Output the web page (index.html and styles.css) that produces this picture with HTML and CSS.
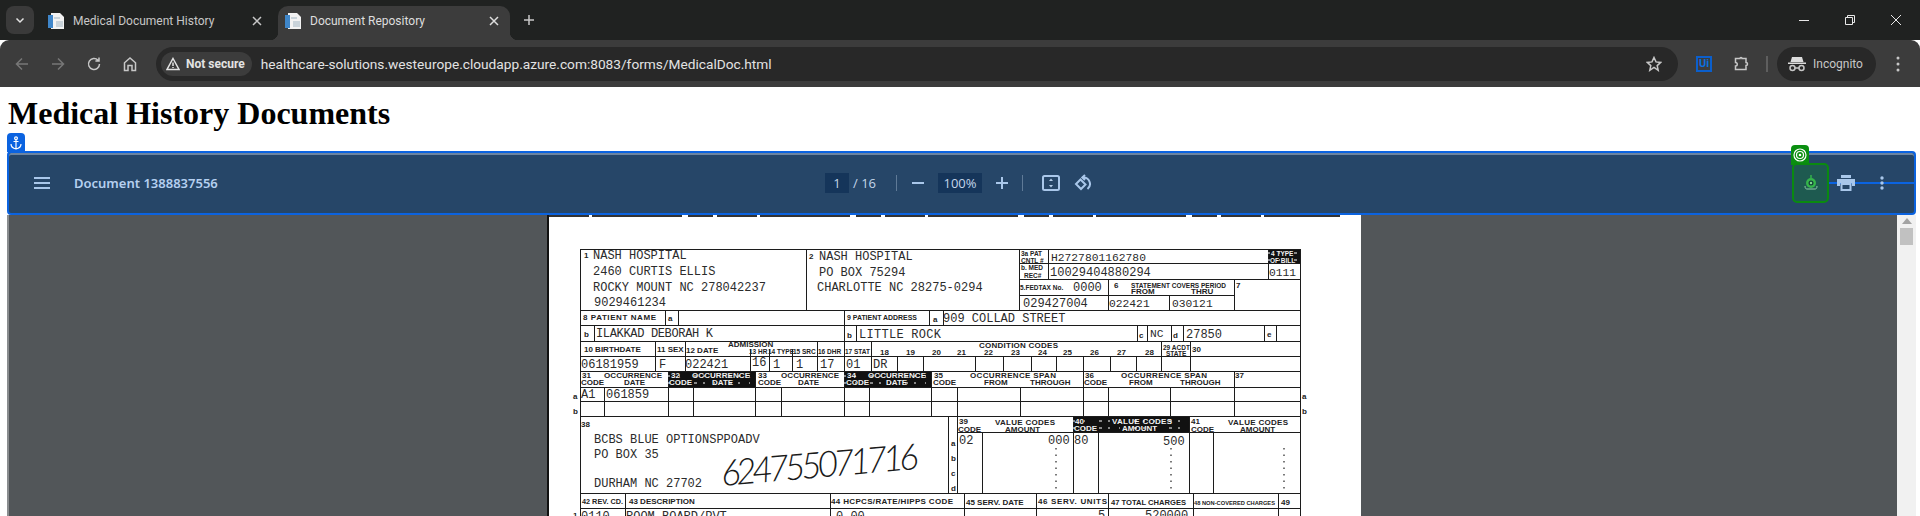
FILE: index.html
```html
<!DOCTYPE html>
<html lang="en">
<head>
  <meta charset="UTF-8" />
  <title>Document Repository</title>
  <link rel="stylesheet" href="styles.css">
</head>
<body>
  <header class="chrome">
    <div class="tabstrip">
      <button class="tab-menu"><svg width="12" height="12" viewBox="0 0 12 12"><path class="ic-line" d="M2.5 4.5 6 8l3.5-3.5"/></svg></button>
      <div class="tab">
        <svg class="favicon" width="16" height="16" viewBox="0 0 16 16"><path fill="#f2f2f2" d="M3 0h9l4 4v12H3z"/><path fill="#3f86c9" d="M0 2h5v13H0z"/><path fill="#c9d3da" d="M8 8h7v6H8zM6 4h6v2H6z"/></svg>
        <span class="tab-title">Medical Document History</span>
        <svg class="tab-x" width="10" height="10" viewBox="0 0 10 10"><path class="ic-line" d="M1 1l8 8M9 1 1 9"/></svg>
      </div>
      <div class="tab active">
        <svg class="favicon" width="16" height="16" viewBox="0 0 16 16"><path fill="#f2f2f2" d="M3 0h9l4 4v12H3z"/><path fill="#3f86c9" d="M0 2h5v13H0z"/><path fill="#c9d3da" d="M8 8h7v6H8zM6 4h6v2H6z"/></svg>
        <span class="tab-title">Document Repository</span>
        <svg class="tab-x" width="10" height="10" viewBox="0 0 10 10"><path class="ic-line" d="M1 1l8 8M9 1 1 9"/></svg>
      </div>
      <svg class="new-tab" width="12" height="12" viewBox="0 0 12 12"><path class="ic-line" d="M6 1v10M1 6h10"/></svg>
      <div class="win-controls">
        <svg width="12" height="12" viewBox="0 0 12 12"><path class="ic-thin" d="M1 6.5h10"/></svg>
        <svg width="12" height="12" viewBox="0 0 12 12"><path class="ic-thin" d="M1.5 3.5h7v7h-7zM3.5 3.5v-2h7v7h-2"/></svg>
        <svg width="12" height="12" viewBox="0 0 12 12"><path class="ic-thin" d="M1 1l10 10M11 1 1 11"/></svg>
      </div>
    </div>
    <div class="toolbar">
      <div class="nav-btns">
        <svg class="dim" width="16" height="16" viewBox="0 0 16 16"><path class="ic-line" d="M14 8H2.5M8 2.5 2.5 8 8 13.5"/></svg>
        <svg class="dim" width="16" height="16" viewBox="0 0 16 16"><path class="ic-line" d="M2 8h11.5M8 2.5 13.5 8 8 13.5"/></svg>
        <svg width="16" height="16" viewBox="0 0 16 16"><path class="ic-line" d="M13.5 8A5.5 5.5 0 1 1 12 4.2M13 1.5v3.600H9.400"/></svg>
        <svg width="16" height="16" viewBox="0 0 16 16"><path class="ic-line" d="M2.5 14.5V6.8L8 2l5.5 4.8v7.700H10v-5H6v5z"/></svg>
      </div>
      <div class="omnibox">
        <div class="secure-chip">
          <svg width="14" height="14" viewBox="0 0 14 14"><path class="ic-line" d="M7 1.5 13 12.5H1zM7 5.5V9M7 10v1"/></svg>
          <span>Not secure</span>
        </div>
        <span class="url">healthcare-solutions.westeurope.cloudapp.azure.com:8083/forms/MedicalDoc.html</span>
        <svg class="star" width="16" height="16" viewBox="0 0 16 16"><path class="ic-line" d="m8 1.5 2 4.400 4.800.5-3.600 3.200 1 4.700L8 11.500l-4.200 2.800 1-4.700L1.200 6.400 6 5.900z"/></svg>
      </div>
      <div class="ext-ui">Ui</div>
      <svg class="ext-puzzle" width="16" height="16" viewBox="0 0 16 16"><path class="ic-line" d="M2.5 2.5H7a1 1 0 0 1 2 0h4v4a1.500 1.500 0 0 1 0 3v4H2.500V10a1.500 1.500 0 0 0 0-3.500z"/></svg>
      <div class="tool-divider"></div>
      <div class="incognito">
        <svg width="20" height="16" viewBox="0 0 20 16"><path fill="#dcdcdc" d="M5 1h10l1.500 5h-13zM1 6.500h18V8H1z"/><circle class="ic-line" cx="5.500" cy="12" r="2.500"/><circle class="ic-line" cx="14.500" cy="12" r="2.500"/><path class="ic-line" d="M8 12h4"/></svg>
        <span>Incognito</span>
      </div>
      <svg class="kebab" width="4" height="16" viewBox="0 0 4 16"><circle fill="#c7c7c7" cx="2" cy="2" r="1.5"/><circle fill="#c7c7c7" cx="2" cy="8" r="1.5"/><circle fill="#c7c7c7" cx="2" cy="14" r="1.5"/></svg>
    </div>
  </header>

  <main class="page">
    <h1>Medical History Documents</h1>

    <section class="viewer">
      <div class="anchor-tab">
        <svg width="12" height="14" viewBox="0 0 12 14"><circle class="ic-white" cx="6" cy="2.2" r="1.4"/><path class="ic-white" d="M6 3.600V13M3.500 5.500h5M1 8c0 3 2.500 4.500 5 5 2.500-.5 5-2 5-5"/></svg>
      </div>

      <div class="pdf-bar">
        <div class="bar-left">
          <svg width="16" height="12" viewBox="0 0 16 12"><path class="ic-bar" d="M0 1h16M0 6h16M0 11h16"/></svg>
          <span class="doc-title">Document 1388837556</span>
        </div>
        <div class="bar-center">
          <span class="num-box page-box">1</span>
          <span class="page-total">/ 16</span>
          <span class="bar-sep"></span>
          <svg width="12" height="12" viewBox="0 0 12 12"><path class="ic-bar" d="M0 6h12"/></svg>
          <span class="num-box zoom-box">100%</span>
          <svg width="12" height="12" viewBox="0 0 12 12"><path class="ic-bar" d="M0 6h12M6 0v12"/></svg>
          <span class="bar-sep"></span>
          <svg width="18" height="16" viewBox="0 0 18 16"><rect class="ic-bar" x="1" y="1" width="16" height="14" rx="1.5"/><path fill="#b4cdea" d="M9 3.500 11 6H7zM9 12.500 7 10h4z"/></svg>
          <svg class="rotate-ic" width="18" height="18" viewBox="0 0 18 18"><path class="ic-bar" d="M6.500 5.500 11.500 10.500 7 15 2 10z"/><path class="ic-bar" d="M8.500 3.500a6.500 6.500 0 0 1 5 11.500M11 1 8.300 3.500 11 6"/></svg>
        </div>
        <div class="bar-right">
          <svg width="18" height="16" viewBox="0 0 18 16"><path fill="#a9c7ea" d="M4 0h10v3H4zM0 4h18v7h-3V8H3v3H0z"/><path class="ic-bar" d="M4.500 9h9v6h-9z"/></svg>
          <svg width="4" height="14" viewBox="0 0 4 14"><circle fill="#a9c7ea" cx="2" cy="2" r="1.7"/><circle fill="#a9c7ea" cx="2" cy="7" r="1.7"/><circle fill="#a9c7ea" cx="2" cy="12" r="1.7"/></svg>
        </div>

        <div class="target-line"></div>
        <div class="target-tab">
          <svg width="14" height="14" viewBox="0 0 14 14"><circle class="ic-white" cx="7" cy="7" r="6"/><circle class="ic-white" cx="7" cy="7" r="3.5"/><circle fill="#fff" cx="7" cy="7" r="1.3"/></svg>
        </div>
        <div class="target-box">
          <svg width="16" height="16" viewBox="0 0 16 16"><path class="ic-tgt-pale" d="M2 11c0 2.500 1 3 2 3h8c1 0 2-.5 2-3"/><circle cx="8" cy="8" r="5" fill="#35b54a"/><circle cx="8" cy="8" r="2.500" fill="#153f3a"/><circle cx="8" cy="8" r="1.200" fill="#7fdc8e"/><path class="ic-tgt" d="M8 0v3"/></svg>
        </div>
      </div>

      <div class="doc-row">
        <div class="doc-area">
          <svg class="sheet" width="812" height="301" viewBox="549 215 812 301">
            <path class="scan-line" d="M549 216H1340"/>

            <rect class="inv" x="668" y="372" width="87" height="15"/>
            <rect class="inv" x="844" y="372" width="87" height="15"/>
            <rect class="inv" x="1073" y="417" width="116" height="15"/>
            <rect class="inv" x="1268" y="250" width="33" height="13"/>

            <path class="rule" d="M580 249.5H1301M1019 263.5H1301M1019 279.5H1301M1019 295.5H1234M580 310.5H1301M580 325.5H1301M580 341.5H1301M580 356.5H1301M580 371.5H1301M580 387.5H1301M580 401.5H1301M580 416.5H1301M957 432.5H1301M580 493.5H1301M580 508.5H1301"/>
            <path class="rule" d="M580.5 249V516M1300.5 249V516M806.5 249V310M1019.5 249V310M1048.5 249V279M1268.5 249V279M1108.5 279V310M1169.5 295V310M1234.5 279V310"/>
            <path class="rule" d="M665.5 311V325M678.5 311V325M844.5 310V341M929.5 310V325M943.5 310V325M594.5 325V341M856.5 325V341M1137.5 325V341M1147.5 325V341M1171.5 325V341M1183.5 325V341M1264.5 325V341M1276.5 325V341"/>
            <path class="rule" d="M655.5 341V371M685.5 341V371M750.5 349V371M769.5 349V371M792.5 349V371M817.5 341V371M844.5 341V371M871.5 341V371M897.5 356V371M923.5 356V371M975.5 356V371M1003.5 356V371M1031.5 356V371M1056.5 356V371M1083.5 356V371M1110.5 356V371M1136.5 356V371M1161.5 341V371M1190.5 341V371"/>
            <path class="rule" d="M604.5 387V416M668.5 371V416M693.5 387V416M755.5 371V416M781.5 387V416M844.5 371V416M869.5 387V416M931.5 371V416M957.5 387V416M1020.5 387V416M1083.5 371V416M1108.5 387V416M1170.5 387V416M1234.5 371V416"/>
            <path class="rule" d="M948.5 416V493M957.5 416V493M982.5 432V493M1073.5 416V493M1098.5 432V493M1189.5 416V493M1213.5 432V493"/>
            <path class="rule" d="M625.5 493V516M830.5 493V516M964.5 493V516M1036.5 493V516M1108.5 493V516M1193.5 493V516M1278.5 493V516"/>
            <path class="dots" d="M1056 448V491M1171 448V491M1284 448V491"/>

            <text class="lbl" x="584" y="258">1</text>
            <text class="mono" x="593" y="259">NASH HOSPITAL</text>
            <text class="mono" x="593" y="275">2460 CURTIS ELLIS</text>
            <text class="mono" x="593" y="291">ROCKY MOUNT NC 278042237</text>
            <text class="mono" x="594" y="306">9029461234</text>
            <text class="lbl" x="809" y="259">2</text>
            <text class="mono" x="819" y="260">NASH HOSPITAL</text>
            <text class="mono" x="819" y="276">PO BOX 75294</text>
            <text class="mono" x="817" y="291">CHARLOTTE NC 28275-0294</text>

            <text class="tiny" x="1021" y="256">3a PAT</text>
            <text class="tiny" x="1021" y="263">CNTL #</text>
            <text class="tiny" x="1021" y="270">b. MED</text>
            <text class="tiny" x="1024" y="278">REC#</text>
            <text class="mono sm" x="1051" y="261">H2727801162780</text>
            <text class="mono" x="1050" y="276">10029404880294</text>
            <text class="tiny rev" x="1271" y="256">4 TYPE</text>
            <text class="tiny rev" x="1270" y="263">OF BILL</text>
            <text class="mono sm" x="1269" y="276">0111</text>

            <text class="tiny" x="1020" y="290">5.FEDTAX No.</text>
            <text class="mono" x="1073" y="291">0000</text>
            <text class="lbl" x="1114" y="288">6</text>
            <text class="tiny" x="1131" y="288" textLength="95" lengthAdjust="spacingAndGlyphs">STATEMENT COVERS PERIOD</text>
            <text class="lbl" x="1131" y="294">FROM</text>
            <text class="lbl" x="1191" y="294">THRU</text>
            <text class="lbl" x="1236" y="288">7</text>
            <text class="mono" x="1023" y="307">029427004</text>
            <text class="mono sm" x="1109" y="307">022421</text>
            <text class="mono sm" x="1172" y="307">030121</text>

            <text class="lbl" x="583" y="320" textLength="73">8 PATIENT NAME</text>
            <text class="lbl" x="668" y="321">a</text>
            <text class="lbl" x="847" y="320" textLength="70" lengthAdjust="spacingAndGlyphs">9 PATIENT ADDRESS</text>
            <text class="lbl" x="933" y="322">a</text>
            <text class="mono" x="943" y="322">909 COLLAD  STREET</text>
            <text class="lbl" x="584" y="337">b</text>
            <text class="mono" x="596" y="337" textLength="117">ILAKKAD DEBORAH K</text>
            <text class="lbl" x="847" y="338">b</text>
            <text class="mono" x="859" y="338" textLength="82">LITTLE ROCK</text>
            <text class="lbl" x="1139" y="338">c</text>
            <text class="mono sm" x="1150" y="337">NC</text>
            <text class="lbl" x="1173" y="338">d</text>
            <text class="mono" x="1186" y="338">27850</text>
            <text class="lbl" x="1267" y="337">e</text>

            <text class="lbl" x="584" y="352">10 BIRTHDATE</text>
            <text class="lbl" x="657" y="352">11 SEX</text>
            <text class="lbl" x="686" y="353">12 DATE</text>
            <text class="lbl" x="728" y="347">ADMISSION</text>
            <text class="tiny" x="749" y="354">13 HR</text>
            <text class="tiny" x="768" y="354">14 TYPE</text>
            <text class="tiny" x="793" y="354">15 SRC</text>
            <text class="tiny" x="818" y="354">16 DHR</text>
            <text class="tiny" x="845" y="354">17 STAT</text>
            <text class="lbl" x="880" y="355">18</text>
            <text class="lbl" x="906" y="355">19</text>
            <text class="lbl" x="932" y="355">20</text>
            <text class="lbl" x="957" y="355">21</text>
            <text class="lbl" x="984" y="355">22</text>
            <text class="lbl" x="1011" y="355">23</text>
            <text class="lbl" x="1038" y="355">24</text>
            <text class="lbl" x="1063" y="355">25</text>
            <text class="lbl" x="1090" y="355">26</text>
            <text class="lbl" x="1117" y="355">27</text>
            <text class="lbl" x="1145" y="355">28</text>
            <text class="lbl" x="979" y="348" textLength="79">CONDITION CODES</text>
            <text class="tiny" x="1163" y="350">29 ACDT</text>
            <text class="tiny" x="1166" y="356">STATE</text>
            <text class="lbl" x="1192" y="352">30</text>

            <text class="mono" x="581" y="368">06181959</text>
            <text class="mono" x="659" y="368">F</text>
            <text class="mono" x="685" y="368">022421</text>
            <text class="mono" x="752" y="366">16</text>
            <text class="mono" x="773" y="368">1</text>
            <text class="mono" x="796" y="368">1</text>
            <text class="mono" x="820" y="368">17</text>
            <text class="mono" x="846" y="368">01</text>
            <text class="mono" x="873" y="368">DR</text>

            <text class="lbl" x="582" y="378">31</text>
            <text class="lbl" x="604" y="378" textLength="58">OCCURRENCE</text>
            <text class="lbl" x="581" y="385">CODE</text>
            <text class="lbl" x="624" y="385">DATE</text>
            <text class="lbl rev" x="671" y="378">32</text>
            <text class="lbl rev" x="692" y="378" textLength="58">OCCURRENCE</text>
            <text class="lbl rev" x="669" y="385">CODE</text>
            <text class="lbl rev" x="712" y="385">DATE</text>
            <text class="lbl" x="758" y="378">33</text>
            <text class="lbl" x="781" y="378" textLength="58">OCCURRENCE</text>
            <text class="lbl" x="758" y="385">CODE</text>
            <text class="lbl" x="798" y="385">DATE</text>
            <text class="lbl rev" x="847" y="378">34</text>
            <text class="lbl rev" x="868" y="378" textLength="58">OCCURRENCE</text>
            <text class="lbl rev" x="846" y="385">CODE</text>
            <text class="lbl rev" x="886" y="385">DATE</text>
            <text class="lbl" x="934" y="378">35</text>
            <text class="lbl" x="933" y="385">CODE</text>
            <text class="lbl" x="970" y="378" textLength="86">OCCURRENCE SPAN</text>
            <text class="lbl" x="984" y="385">FROM</text>
            <text class="lbl" x="1030" y="385">THROUGH</text>
            <text class="lbl" x="1085" y="378">36</text>
            <text class="lbl" x="1084" y="385">CODE</text>
            <text class="lbl" x="1121" y="378" textLength="86">OCCURRENCE SPAN</text>
            <text class="lbl" x="1129" y="385">FROM</text>
            <text class="lbl" x="1180" y="385">THROUGH</text>
            <text class="lbl" x="1235" y="378">37</text>

            <text class="lbl" x="573" y="399">a</text>
            <text class="lbl" x="573" y="414">b</text>
            <text class="lbl" x="1302" y="399">a</text>
            <text class="lbl" x="1302" y="414">b</text>
            <text class="mono" x="581" y="398">A1</text>
            <text class="mono" x="606" y="398">061859</text>

            <text class="lbl" x="581" y="427">38</text>
            <text class="mono" x="594" y="443">BCBS BLUE OPTIONSPPOADV</text>
            <text class="mono" x="594" y="458">PO BOX 35</text>
            <text class="mono" x="594" y="487">DURHAM NC 27702</text>
            <text class="hand" x="722" y="486" textLength="198" transform="rotate(-5 722 486)">624755071716</text>
            <text class="lbl" x="951" y="446">a</text>
            <text class="lbl" x="951" y="461">b</text>
            <text class="lbl" x="951" y="476">c</text>
            <text class="lbl" x="951" y="491">d</text>

            <text class="lbl" x="959" y="424">39</text>
            <text class="lbl" x="958" y="432">CODE</text>
            <text class="lbl" x="995" y="425" textLength="60">VALUE CODES</text>
            <text class="lbl" x="1005" y="432">AMOUNT</text>
            <text class="lbl rev" x="1075" y="424">40</text>
            <text class="lbl rev" x="1074" y="431">CODE</text>
            <text class="lbl rev" x="1112" y="424" textLength="60">VALUE CODES</text>
            <text class="lbl rev" x="1122" y="431">AMOUNT</text>
            <text class="lbl" x="1191" y="424">41</text>
            <text class="lbl" x="1191" y="432">CODE</text>
            <text class="lbl" x="1228" y="425" textLength="60">VALUE CODES</text>
            <text class="lbl" x="1240" y="432">AMOUNT</text>
            <text class="mono" x="959" y="444">02</text>
            <text class="mono" x="1048" y="444">000</text>
            <text class="mono" x="1074" y="444">80</text>
            <text class="mono" x="1163" y="445">500</text>

            <path class="specks" d="M668 376H755M668 383H755M844 376H931M844 383H931M1073 421H1189M1073 428H1189M1268 253H1301M1268 260H1301"/>

            <text class="lbl" x="582" y="504" textLength="41" lengthAdjust="spacingAndGlyphs">42 REV. CD.</text>
            <text class="lbl" x="629" y="504">43 DESCRIPTION</text>
            <text class="lbl" x="831" y="504" textLength="122">44 HCPCS/RATE/HIPPS CODE</text>
            <text class="lbl" x="966" y="505">45 SERV. DATE</text>
            <text class="lbl" x="1038" y="504" textLength="69">46 SERV. UNITS</text>
            <text class="lbl" x="1111" y="505" textLength="75" lengthAdjust="spacingAndGlyphs">47 TOTAL CHARGES</text>
            <text class="micro" x="1194" y="505" textLength="81" lengthAdjust="spacingAndGlyphs">48 NON-COVERED CHARGES</text>
            <text class="lbl" x="1281" y="505">49</text>

            <text class="lbl" x="573" y="518">1</text>
            <text class="mono" x="581" y="520">0110</text>
            <text class="mono" x="626" y="520">ROOM-BOARD/PVT</text>
            <text class="mono" x="836" y="520">0.00</text>
            <text class="mono" x="1098" y="519">5</text>
            <text class="mono" x="1145" y="519">520000</text>
          </svg>
        </div>
        <div class="scrollbar">
          <svg width="10" height="6" viewBox="0 0 10 6"><path fill="#a3a3a3" d="M5 0l5 6H0z"/></svg>
          <div class="scroll-thumb"></div>
        </div>
      </div>
    </section>
  </main>
</body>
</html>
```

FILE: styles.css
```css
* {
  box-sizing: border-box;
}

html, body {
  margin: 0;
  height: 516px;
  overflow: hidden;
  background: white;
}

/* browser frame */
.chrome {
  font-family: Roboto, 'Liberation Sans', sans-serif;
  color: #c7c7c7;
}

.tabstrip {
  display: flex;
  align-items: flex-end;
  height: 40px;
  background: #202221;
}

.tab-menu {
  align-self: flex-start;
  display: flex;
  align-items: center;
  justify-content: center;
  width: 28px;
  height: 28px;
  margin: 6px 7px 0 6px;
  padding: 0;
  border: none;
  border-radius: 8px;
  background: #3a3a3a;
  color: #e3e3e3;
}

.tab {
  position: relative;
  display: flex;
  align-items: center;
  gap: 9px;
  width: 232px;
  height: 34px;
  padding: 0 11px 4px 7px;
  font-size: 12px;
}

.tab.active {
  margin-left: 5px;
  background: #3c3c3c;
  border-radius: 10px 10px 0 0;
  color: #dedede;
}

/* little flares at the foot of the active tab */
.tab.active::before,
.tab.active::after {
  content: "";
  position: absolute;
  bottom: 0;
  width: 8px;
  height: 8px;
}

.tab.active::before {
  left: -8px;
  background: radial-gradient(circle at 0 0, transparent 8px, #3c3c3c 8.5px);
}

.tab.active::after {
  right: -8px;
  background: radial-gradient(circle at 100% 0, transparent 8px, #3c3c3c 8.5px);
}

.tab-title {
  flex: 1;
  white-space: nowrap;
}

.favicon, .tab-x {
  flex: none;
}

.new-tab {
  align-self: center;
  margin-left: 13px;
}

.win-controls {
  align-self: flex-start;
  display: flex;
  gap: 34px;
  margin: 14px 18px 0 auto;
}

.ic-line {
  fill: none;
  stroke: currentColor;
  stroke-width: 1.5;
}

.ic-thin {
  fill: none;
  stroke: #e8e8e8;
  stroke-width: 1;
}

.toolbar {
  display: flex;
  align-items: center;
  height: 47px;
  padding: 0 20px 0 14px;
  background: #3c3c3c;
  border-radius: 9px 9px 0 0;
}

.nav-btns {
  display: flex;
  gap: 20px;
  margin-right: 18px;
}

.nav-btns .dim {
  color: #777;
}

.omnibox {
  display: flex;
  align-items: center;
  width: 1522px;
  height: 34px;
  padding: 0 16px 0 5px;
  border-radius: 17px;
  background: #282828;
}

.secure-chip {
  display: flex;
  align-items: center;
  gap: 6px;
  height: 24px;
  padding: 0 7px 0 5px;
  border-radius: 12px;
  background: #3c3c3c;
  color: #e3e3e3;
  font-size: 12px;
  font-weight: 700;
}

.url {
  margin-left: 9px;
  color: #e3e3e3;
  font-size: 13.7px;
  white-space: nowrap;
}

.star {
  margin-left: auto;
}

.ext-ui {
  width: 16px;
  height: 16px;
  margin-left: 18px;
  border: 2px solid #0b5fcc;
  color: #0b6fe0;
  font-size: 11px;
  font-weight: 700;
  line-height: 12px;
  text-align: center;
}

.ext-puzzle {
  margin-left: 21px;
}

.tool-divider {
  width: 2px;
  height: 16px;
  margin: 0 9px 0 17px;
  background: #5e5e5e;
}

.incognito {
  display: flex;
  align-items: center;
  gap: 6px;
  width: 99px;
  height: 34px;
  padding-left: 10px;
  border-radius: 17px;
  background: #282828;
  font-size: 12px;
}

.kebab {
  margin-left: 20px;
}

/* page */
.page h1 {
  margin: 8px 0 19px 8px;
  font-family: 'Liberation Serif', serif;
  font-size: 32px;
  font-weight: 700;
  line-height: 37px;
  color: black;
}

.viewer {
  position: relative;
  margin: 0 4px 0 7px;
}

.anchor-tab {
  position: absolute;
  left: 0;
  top: -18px;
  display: flex;
  align-items: center;
  justify-content: center;
  width: 18px;
  height: 19px;
  border-radius: 4px 4px 0 0;
  background: #0b63e0;
}

.ic-white {
  fill: none;
  stroke: white;
  stroke-width: 1.2;
}

.pdf-bar {
  position: relative;
  display: grid;
  grid-template-columns: 816px auto 1fr;
  align-items: center;
  height: 64px;
  border: 2px solid #0b63e0;
  border-radius: 4px;
  background: #264668;
  box-shadow: inset 0 2px 0 #6c84a0;
  font-family: 'Open Sans', 'Liberation Sans', sans-serif;
  color: #c4d6ea;
}

.ic-bar {
  fill: none;
  stroke: #a9c7ea;
  stroke-width: 2;
}

.bar-left {
  display: flex;
  align-items: center;
  gap: 24px;
  padding-left: 25px;
}

.doc-title {
  color: #b5d0f0;
  font-family: 'Noto Sans', sans-serif;
  font-size: 13px;
  font-weight: 600;
}

.bar-center {
  display: flex;
  align-items: center;
  font-size: 13px;
}

.num-box {
  height: 20px;
  background: #15355a;
  line-height: 20px;
  text-align: center;
}

.page-box {
  width: 24px;
}

.page-total {
  margin-left: 4px;
}

.bar-sep {
  width: 1px;
  height: 16px;
  margin: 0 15px 0 20px;
  background: #5f7a97;
}

.zoom-box {
  width: 44px;
  margin: 0 14px;
}

.bar-center svg + .bar-sep {
  margin: 0 19px 0 14px;
}

.rotate-ic {
  margin-left: 14px;
}

.bar-right {
  position: relative;
  z-index: 1;
  display: flex;
  align-items: center;
  justify-content: flex-end;
  gap: 25px;
  padding-right: 30px;
}

.target-line {
  position: absolute;
  left: 1820px;
  right: 0;
  top: 29px;
  height: 2px;
  background: #0b63e0;
}

.target-tab {
  position: absolute;
  left: 1782px;
  top: -8px;
  display: flex;
  align-items: center;
  justify-content: center;
  width: 18px;
  height: 20px;
  border-radius: 4px 4px 0 0;
  background: #0a8f10;
}

.target-box {
  position: absolute;
  left: 1783px;
  top: 10px;
  display: flex;
  align-items: center;
  justify-content: center;
  width: 37px;
  height: 40px;
  border: 2px solid #0a8a10;
  border-radius: 5px;
  background: #1e5a50;
}

.ic-tgt {
  fill: none;
  stroke: #35b54a;
  stroke-width: 1.5;
}

.ic-tgt-pale {
  fill: none;
  stroke: #8fcfa8;
  stroke-width: 1;
}

.doc-row {
  display: flex;
  height: 301px;
  background: #525659;
  border-left: 2px solid #8a8d8f;
}

.doc-area {
  flex: 1;
  padding-left: 540px;
}

.sheet {
  display: block;
  background: white;
  box-shadow: -2px 0 0 #111;
}

.scan-line {
  fill: none;
  stroke: #333;
  stroke-width: 2;
  stroke-dasharray: 40 3 90 6 25 4;
}

.rule {
  fill: none;
  stroke: #1c1c1c;
  stroke-width: 1;
}

.dots {
  fill: none;
  stroke: #222;
  stroke-width: 1.2;
  stroke-dasharray: 1.5 5;
}

.inv {
  fill: #111;
}

.specks {
  fill: none;
  stroke: white;
  stroke-width: 1;
  stroke-dasharray: 2 9 1 14 3 6;
}

.mono {
  font-family: 'Liberation Mono', monospace;
  font-size: 12px;
  fill: #2b2b2b;
}

.mono.sm {
  font-size: 11.3px;
}

.lbl {
  font-family: 'Liberation Sans', sans-serif;
  font-size: 8px;
  font-weight: 700;
  fill: #222;
}

.tiny {
  font-family: 'Liberation Sans', sans-serif;
  font-size: 6.5px;
  font-weight: 700;
  fill: #222;
}

.micro {
  font-family: 'Liberation Sans', sans-serif;
  font-size: 6px;
  font-weight: 700;
  fill: #222;
}

.rev {
  fill: #f0f0f0;
}

.hand {
  font-family: Lato, sans-serif;
  font-size: 36px;
  font-style: italic;
  font-weight: 300;
  fill: #1a1a1a;
}

.scrollbar {
  flex: none;
  display: flex;
  flex-direction: column;
  align-items: center;
  width: 19px;
  padding-top: 3px;
  background: #f1f1f1;
}

.scroll-thumb {
  width: 13px;
  height: 17px;
  margin-top: 4px;
  background: #c1c1c1;
}
```
